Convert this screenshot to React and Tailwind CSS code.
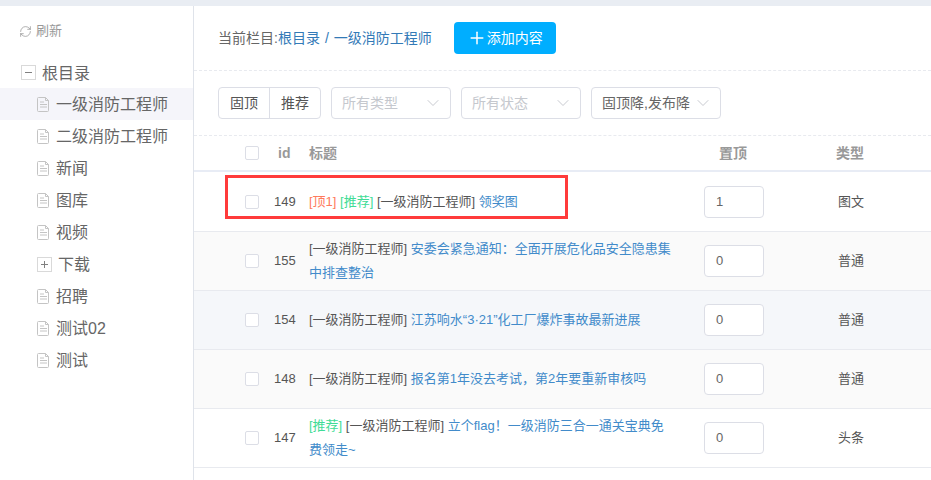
import React from "react";
import { ChevronDown, Plus, RefreshCw } from "lucide-react";

const font = { fontFamily: '"Liberation Sans","Noto Sans CJK SC",sans-serif' };

function FileIcon() {
  return (
    <svg width="13" height="15" viewBox="0 0 13 15" fill="none" className="shrink-0 -translate-y-[1px]">
      <path d="M0.5 1.5a1 1 0 0 1 1-1h7l3 3v10a1 1 0 0 1-1 1h-9a1 1 0 0 1-1-1z" stroke="#c4c4c4" />
      <path d="M8.5 0.5v3h3" stroke="#c4c4c4" />
      <path d="M3 5h4M3 7.5h7M3 10h7" stroke="#c4c4c4" />
    </svg>
  );
}

function Box({ minus }) {
  return (
    <span className="flex h-[15px] w-[15px] shrink-0 -translate-y-[1px] items-center justify-center border border-[#d9d9d9] bg-white">
      <svg width="9" height="9" viewBox="0 0 9 9">
        <path d={minus ? "M1 4.5h7" : "M1 4.5h7M4.5 1v7"} stroke="#808080" />
      </svg>
    </span>
  );
}

const tree = ["一级消防工程师", "二级消防工程师", "新闻", "图库", "视频", "下载", "招聘", "测试02", "测试"];

function Sidebar() {
  return (
    <aside className="w-[194px] shrink-0 border-r border-[#dfe3ea] pt-[16px]">
      <div className="flex h-[18px] items-center gap-[4px] pl-[19px] text-[13px] text-[#999]">
        <RefreshCw size={13} strokeWidth={1.2} color="#888" />
        <span>刷新</span>
      </div>
      <div className="mt-[17px] text-[16px] text-[#666]">
        <div className="flex h-[31px] items-center gap-[6px] pl-[21px] pt-[2px]">
          <Box minus />
          <span>根目录</span>
        </div>
        {tree.map((t, i) => (
          <div key={t} className={`flex h-[32px] items-center pl-[37px] pt-[2px] ${i === 0 ? "bg-[#f5f5fa]" : ""}`}>
            <span className="flex items-center gap-[6px]">
              {t === "下载" ? <Box /> : <FileIcon />}
              <span>{t}</span>
            </span>
          </div>
        ))}
      </div>
    </aside>
  );
}

function Select({ label, w, dark }) {
  return (
    <div className={`flex h-[32px] items-center justify-between rounded-[4px] border border-[#dcdee6] pl-[10px] pr-[7px] text-[14px] ${w} ${dark ? "text-[#666]" : "text-[#c5c8ce]"}`}>
      <span className="whitespace-nowrap">{label}</span>
      <ChevronDown size={20} strokeWidth={0.9} color="#b5b8c0" className="shrink-0" />
    </div>
  );
}

const Red = ({ children }) => <span className="text-[#ff7a5c]">{children}</span>;
const Green = ({ children }) => <span className="text-[#3fdc96]">{children}</span>;
const Cat = () => <span className="text-[#555]">[一级消防工程师]</span>;
const Link = ({ children }) => <span className="text-[#428bca]">{children}</span>;

const rows = [
  { id: 149, h: "h-[60px]", bg: "bg-white", top: "1", type: "图文", title: <><Red>[顶1]</Red> <Green>[推荐]</Green> <Cat /> <Link>领奖图</Link></> },
  { id: 155, h: "h-[59px]", bg: "bg-[#fafafa]", top: "0", type: "普通", title: <><Cat /> <Link>安委会紧急通知：全面开展危化品安全隐患集中排查整治</Link></> },
  { id: 154, h: "h-[59px]", bg: "bg-[#f5f7fa]", top: "0", type: "普通", title: <><Cat /> <Link>江苏响水“3·21”化工厂爆炸事故最新进展</Link></> },
  { id: 148, h: "h-[59px]", bg: "bg-[#fafafa]", top: "0", type: "普通", title: <><Cat /> <Link>报名第1年没去考试，第2年要重新审核吗</Link></> },
  { id: 147, h: "h-[59px]", bg: "bg-white", top: "0", type: "头条", title: <><Green>[推荐]</Green> <Cat /> <Link>立个flag！一级消防三合一通关宝典免费领走~</Link></> },
];

function Check() {
  return <span className="block h-[14px] w-[14px] rounded-[2px] border border-[#dcdee6] bg-white" />;
}

function Row({ r }) {
  return (
    <div className={`flex items-center border-b border-[#e8eaef] text-[13px] ${r.h} ${r.bg}`}>
      <div className="flex w-[65px] shrink-0 justify-end"><Check /></div>
      <div className="w-[50px] shrink-0 pl-[15px] text-[#555]">{r.id}</div>
      <div className="w-[365px] shrink-0 leading-[24px]">{r.title}</div>
      <div className="ml-[30px] flex h-[32px] w-[60px] shrink-0 items-center rounded-[4px] border border-[#dcdee6] bg-white pl-[11px] text-[13px] text-[#666]">{r.top}</div>
      <div className="ml-[74px] text-[#555]">{r.type}</div>
    </div>
  );
}

export default function App() {
  return (
    <div style={font} className="relative h-[480px] w-[931px] overflow-hidden bg-white">
      <div className="h-[6px] bg-[#e9edf3]" />
      <div className="flex h-[474px]">
        <Sidebar />
        <main className="min-w-0 flex-1">
          <div className="flex h-[65px] items-center border-b border-dashed border-[#e8eaef] pl-[24px] text-[14px]">
            <span className="text-[#666]">当前栏目:</span>
            <span className="text-[#337ab7]">根目录</span>
            <span className="mx-[5px] text-[#337ab7]">/</span>
            <span className="text-[#337ab7]">一级消防工程师</span>
            <button className="ml-[22px] flex h-[32px] w-[102px] items-center justify-center rounded-[4px] bg-[#00aeff] text-[14px] text-white">
              <Plus size={20} strokeWidth={1.8} />
              添加内容
            </button>
          </div>
          <div className="flex h-[65px] items-center gap-[10px] border-b border-dashed border-[#e8eaef] pl-[24px]">
            <div className="flex h-[32px] w-[103px] rounded-[4px] border border-[#dcdee6] text-[14px] text-[#555]">
              <span className="flex w-[51px] items-center justify-center border-r border-[#dcdee6]">固顶</span>
              <span className="flex flex-1 items-center justify-center">推荐</span>
            </div>
            <Select label="所有类型" w="w-[120px]" />
            <Select label="所有状态" w="w-[120px]" />
            <Select label="固顶降,发布降" w="w-[130px]" dark />
          </div>
          <div className="flex h-[36px] items-center border-b-2 border-[#e8ecf5] text-[14px] font-bold text-[#999]">
            <div className="flex w-[65px] shrink-0 justify-end font-normal"><Check /></div>
            <div className="w-[50px] shrink-0 pl-[19px]">id</div>
            <div className="w-[365px] shrink-0">标题</div>
            <div className="ml-[45px] w-[60px] shrink-0">置顶</div>
            <div className="ml-[57px]">类型</div>
          </div>
          {rows.map((r) => <Row key={r.id} r={r} />)}
        </main>
      </div>
      <div className="absolute left-[225px] top-[175px] h-[44px] w-[343px] border-[3px] border-[#ff3b3b]" />
    </div>
  );
}
